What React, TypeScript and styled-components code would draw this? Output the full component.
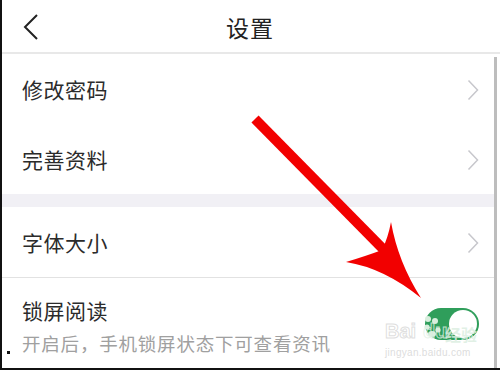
import React from "react";
import styled, { createGlobalStyle } from "styled-components";

const GlobalStyle = createGlobalStyle`
  html, body {
    margin: 0;
    padding: 0;
    background: #fff;
  }
  body {
    font-family: "Noto Sans CJK SC", "Noto Sans", sans-serif;
  }
`;

const items = [
  { label: "修改密码", group: 1 },
  { label: "完善资料", group: 1 },
  { label: "字体大小", group: 2 },
];

const App = () => {
  return (
    <>
      <GlobalStyle />
      <Frame>
        <Header>
          <BackButton>
            <svg width="16" height="26" viewBox="0 0 16 26">
              <path d="M14 1 L2 13 L14 25" fill="none" stroke="#222" strokeWidth="2" />
            </svg>
          </BackButton>
          <Title>设置</Title>
          <span />
        </Header>
        <Body>
          <List>
            <Row>
              <Label>{items[0].label}</Label>
              <Chevron />
            </Row>
            <Row>
              <Label>{items[1].label}</Label>
              <Chevron />
            </Row>
            <GroupGap />
            <Row $divider>
              <Label>{items[2].label}</Label>
              <Chevron />
            </Row>
            <SwitchRow>
              <SwitchText>
                <Label>锁屏阅读</Label>
                <Hint>开启后，手机锁屏状态下可查看资讯</Hint>
              </SwitchText>
              <Toggle $on>
                <Knob />
              </Toggle>
            </SwitchRow>
          </List>
          <ScrollBar />
        </Body>

        <Arrow width="500" height="370" viewBox="0 0 500 370">
          <line x1="255" y1="119" x2="388" y2="254" stroke="#f20000" strokeWidth="10" />
          <path
            d="M421 298 Q384 268 346 262 Q366 256 382 250 Q388 238 391 222 Q398 262 421 298 Z"
            fill="#f20000"
          />
        </Arrow>

        <Watermark>
          <WatermarkPaw width="24" height="26" viewBox="0 0 24 26">
            <circle cx="6" cy="5" r="3" fill="#d8eedd" />
            <circle cx="13" cy="7" r="3" fill="#d8eedd" />
            <circle cx="5" cy="13" r="2.6" fill="#d8eedd" />
            <circle cx="16" cy="16" r="2.6" fill="#d8eedd" />
            <ellipse cx="10" cy="20" rx="4" ry="3" fill="#d8eedd" />
          </WatermarkPaw>
          <Mark>Bai</Mark>
          <MarkDu>du</MarkDu>
          <MarkCn>经验</MarkCn>
          <MarkUrl>jingyan.baidu.com</MarkUrl>
        </Watermark>
        <Speck />
      </Frame>
    </>
  );
};

export default App;

const Chevron = () => (
  <ChevronIcon width="12" height="22" viewBox="0 0 12 22">
    <path d="M1.5 1.5 L10.5 11 L1.5 20.5" fill="none" stroke="#c7c7cc" strokeWidth="1.5" />
  </ChevronIcon>
);

const Frame = styled.div`
  position: relative;
  width: 500px;
  height: 370px;
  box-sizing: border-box;
  border-left: 2px solid #111;
  border-bottom: 2px solid #111;
  display: flex;
  flex-direction: column;
  overflow: hidden;
  background: #fff;
`;

const Header = styled.div`
  height: 52px;
  flex: none;
  display: grid;
  grid-template-columns: 60px 1fr 60px;
  align-items: center;
  border-bottom: 2px solid #e8e8e8;
`;

const BackButton = styled.div`
  display: flex;
  align-items: center;
  padding-left: 21px;
  padding-top: 1px;
`;

const Title = styled.div`
  text-align: center;
  font-size: 23px;
  color: #222;
  margin-left: -2px;
  padding-top: 2px;
  letter-spacing: 1px;
`;

const Body = styled.div`
  flex: 1;
  display: flex;
  min-height: 0;
`;

const List = styled.div`
  flex: 1;
  display: flex;
  flex-direction: column;
`;

const ScrollBar = styled.div`
  width: 3px;
  margin: 3px 3px 0 0;
  background: #bdbdbd;
`;

const Row = styled.div<{ $divider?: boolean }>`
  flex: none;
  display: flex;
  align-items: center;
  justify-content: space-between;
  padding: 0 15px 0 20px;
  box-sizing: border-box;
  border-bottom: ${p => (p.$divider ? "1px solid #e2e2e2" : "none")};
  height: ${p => (p.$divider ? "71px" : "70px")};
`;

const Label = styled.div`
  font-size: 21px;
  color: #2b2b2b;
  line-height: 30px;
  letter-spacing: 0.5px;
`;

const ChevronIcon = styled.svg`
  display: block;
  margin-top: 1px;
`;

const GroupGap = styled.div`
  height: 13px;
  flex: none;
  background: #f1f0f5;
`;

const SwitchRow = styled.div`
  flex: 1;
  display: flex;
  align-items: center;
  justify-content: space-between;
  padding: 0 15px 0 20px;
`;

const SwitchText = styled.div`
  display: flex;
  flex-direction: column;
  gap: 6px;
  padding-top: 4px;
`;

const Hint = styled.div`
  font-size: 18.5px;
  color: #a0a0a0;
  line-height: 24px;
  letter-spacing: 0.8px;
`;

const Toggle = styled.div<{ $on?: boolean }>`
  width: 54px;
  height: 32px;
  border-radius: 16px;
  background: ${p => (p.$on ? "#2f9e5b" : "#e5e5e5")};
  display: flex;
  align-items: center;
  justify-content: ${p => (p.$on ? "flex-end" : "flex-start")};
  padding: 0 2px;
  box-sizing: border-box;
  margin-top: 2px;
`;

const Knob = styled.div`
  width: 28px;
  height: 28px;
  border-radius: 50%;
  background: #fff;
`;

const Arrow = styled.svg`
  position: absolute;
  left: -2px;
  top: 0;
  pointer-events: none;
`;

const Watermark = styled.div`
  position: absolute;
  left: 383px;
  top: 318px;
  width: 100px;
  height: 44px;
  pointer-events: none;
  font-family: "Liberation Sans", Arial, sans-serif;
`;

const WatermarkPaw = styled.svg`
  position: absolute;
  left: 37px;
  top: -4px;
`;

const Mark = styled.span`
  position: absolute;
  left: 0;
  top: 2px;
  font-size: 20px;
  font-weight: bold;
  color: transparent;
  -webkit-text-stroke: 1px rgba(200, 200, 200, 0.6);
`;

const MarkDu = styled.span`
  position: absolute;
  left: 38px;
  top: 2px;
  font-size: 20px;
  font-weight: bold;
  color: transparent;
  -webkit-text-stroke: 1px rgba(225, 240, 228, 0.8);
`;

const MarkCn = styled.span`
  position: absolute;
  left: 60px;
  top: 4px;
  font-size: 16px;
  font-weight: bold;
  color: rgba(220, 238, 225, 0.85);
  font-family: "Noto Sans CJK SC", sans-serif;
`;

const MarkUrl = styled.span`
  position: absolute;
  left: 0;
  top: 29px;
  font-size: 10px;
  color: rgba(205, 205, 205, 0.7);
  letter-spacing: 0.3px;
`;

const Speck = styled.div`
  position: absolute;
  left: 5px;
  top: 351px;
  width: 3px;
  height: 3px;
  background: #111;
`;
